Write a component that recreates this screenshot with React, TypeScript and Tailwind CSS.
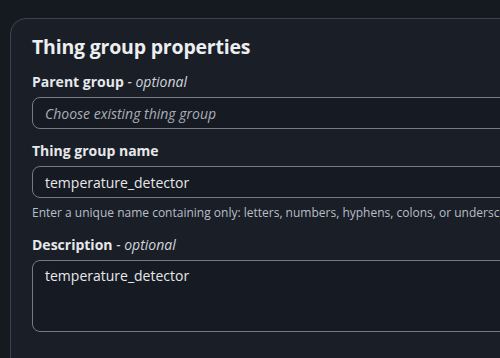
export default function App() {
  const font = { fontFamily: '"Open Sans", "Noto Sans", sans-serif' };
  return (
    <div className="w-[500px] h-[358px] overflow-hidden bg-[#151a21] pt-[18px] pl-[10px]" style={font}>
      <div className="w-[540px] h-[400px] rounded-[16px] border border-[#3d4450] bg-[#1a1e27] pl-[21px] pt-[16px]">
        <h2 className="text-[19.5px] leading-[24px] font-bold text-[#eceef0] tracking-[-0.2px]">Thing group properties</h2>

        <div className="mt-[13px] text-[14px] leading-[20px] font-bold text-[#e6e8ea]">
          Parent group <span className="font-normal italic text-[#d0d4d9]">- optional</span>
        </div>
        <div className="mt-[5px] h-[32px] rounded-[8px] border border-[#737b87] bg-[#161a22] pl-[12px] flex items-center text-[14px] italic text-[#a9afb8]">
          Choose existing thing group
        </div>

        <div className="mt-[12px] text-[14px] leading-[20px] font-bold text-[#e6e8ea]">Thing group name</div>
        <div className="mt-[5px] h-[32px] rounded-[8px] border border-[#737b87] bg-[#161a22] pl-[12px] flex items-center text-[14px] text-[#e6e8ea]">
          temperature_detector
        </div>
        <div className="mt-[7px] text-[12px] leading-[16px] text-[#b8bec7] whitespace-nowrap">
          Enter a unique name containing only: letters, numbers, hyphens, colons, or underscores.
        </div>

        <div className="mt-[14px] text-[14px] leading-[20px] font-bold text-[#e6e8ea]">
          Description <span className="font-normal italic text-[#d0d4d9]">- optional</span>
        </div>
        <div className="mt-[5px] h-[72px] rounded-[8px] border border-[#737b87] bg-[#161a22] pl-[12px] pt-[5px] text-[14px] leading-[20px] text-[#e6e8ea]">
          temperature_detector
        </div>
      </div>
    </div>
  );
}
